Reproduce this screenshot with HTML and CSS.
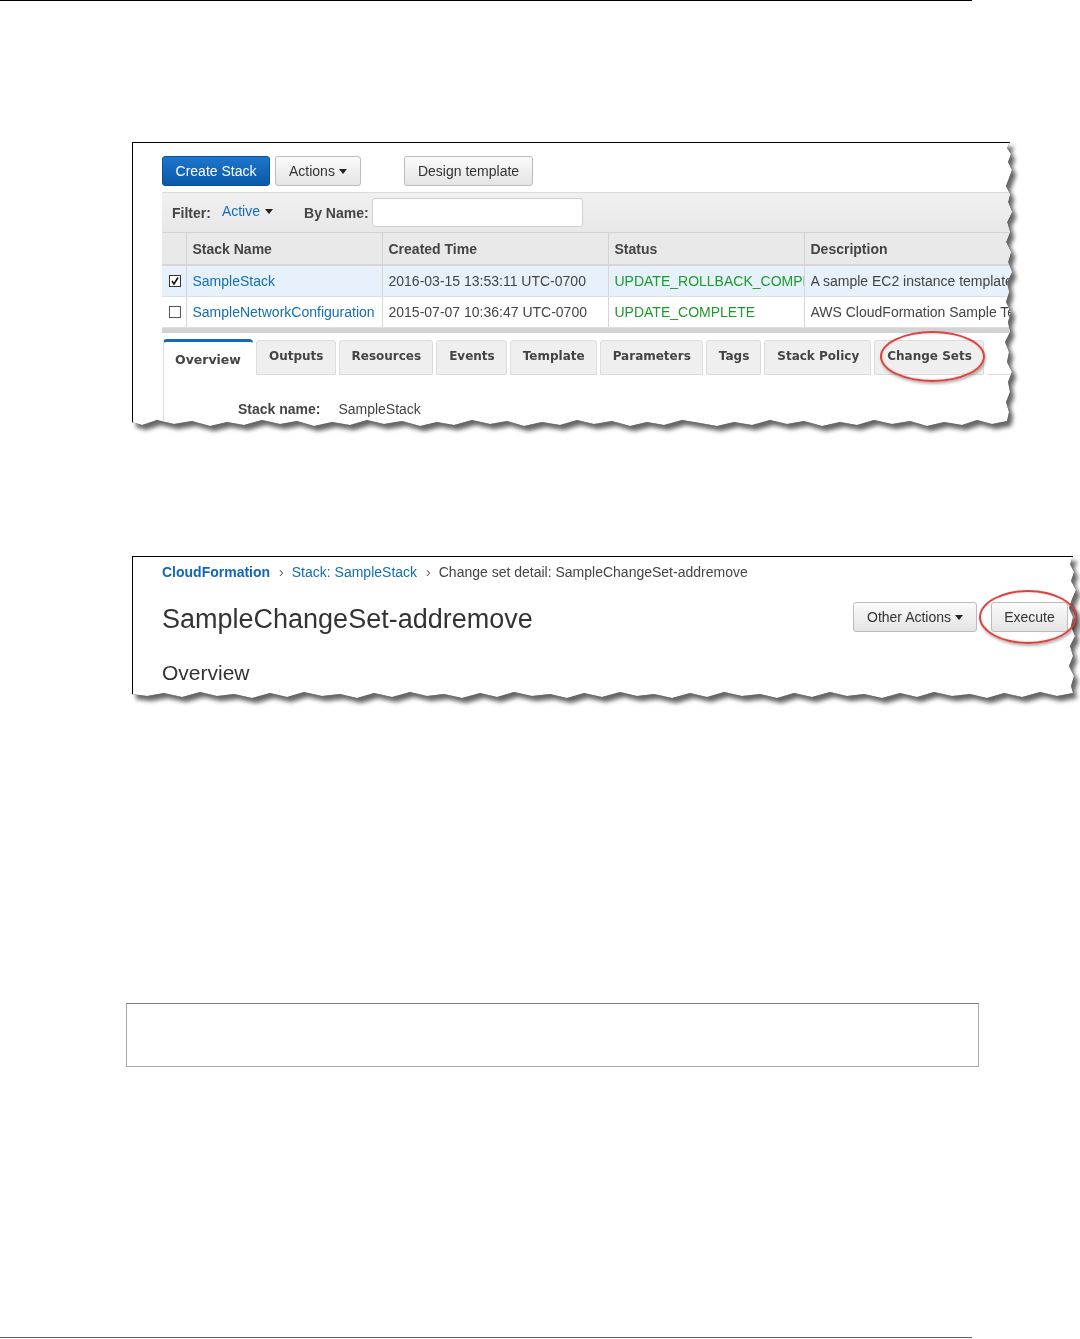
FILE: index.html
```html
<!DOCTYPE html>
<html lang="en">
<head>
  <meta charset="UTF-8">
  <title>Change Sets</title>
  <link rel="stylesheet" href="styles.css">
</head>
<body>
  <div class="rule-top"></div>

  <div class="shot shot-stacks">
    <div class="shot-inner">
      <div class="toolbar">
        <button class="btn btn-primary">Create Stack</button>
        <button class="btn">Actions<span class="caret"></span></button>
        <button class="btn btn-design">Design template</button>
      </div>

      <div class="filter-bar">
        <span class="label">Filter:</span>
        <span class="filter-link">Active<span class="caret"></span></span>
        <span class="label by-name">By Name:</span>
        <span class="name-input"></span>
      </div>

      <table class="stacks">
        <colgroup>
          <col class="c-check"><col class="c-name"><col class="c-time"><col class="c-status"><col class="c-desc">
        </colgroup>
        <thead>
          <tr>
            <th></th>
            <th>Stack Name</th>
            <th>Created Time</th>
            <th>Status</th>
            <th>Description</th>
          </tr>
        </thead>
        <tbody>
          <tr class="selected">
            <td class="check-cell">
              <svg width="12" height="12" viewBox="0 0 12 12"><rect x="0.5" y="0.5" width="11" height="11" fill="#fff" stroke="#333"/><path d="M3 6 L5 9 L9 2.5" fill="none" stroke="#111" stroke-width="1.6"/></svg>
            </td>
            <td><a>SampleStack</a></td>
            <td>2016-03-15 13:53:11 UTC-0700</td>
            <td class="status"><span class="clip">UPDATE_ROLLBACK_COMPLETE</span></td>
            <td><span class="clip">A sample EC2 instance template</span></td>
          </tr>
          <tr>
            <td class="check-cell">
              <svg width="12" height="12" viewBox="0 0 12 12"><rect x="0.5" y="0.5" width="11" height="11" fill="#fff" stroke="#555"/></svg>
            </td>
            <td><a>SampleNetworkConfiguration</a></td>
            <td>2015-07-07 10:36:47 UTC-0700</td>
            <td class="status">UPDATE_COMPLETE</td>
            <td><span class="clip">AWS CloudFormation Sample Template</span></td>
          </tr>
        </tbody>
      </table>
      <div class="splitter"></div>

      <div class="tabs">
        <span class="tab active">Overview</span>
        <span class="tab">Outputs</span>
        <span class="tab">Resources</span>
        <span class="tab">Events</span>
        <span class="tab">Template</span>
        <span class="tab">Parameters</span>
        <span class="tab">Tags</span>
        <span class="tab">Stack Policy</span>
        <span class="tab">Change Sets</span>
        <span class="tab-rest"></span>
      </div>
      <div class="tab-panel">
        <span class="field-label">Stack name:</span>
        <span class="field-value">SampleStack</span>
      </div>
    </div>
    <span class="callout callout-tab"></span>
  </div>

  <div class="shot shot-detail">
    <div class="shot-inner">
      <div class="crumbs">
        <a class="crumb-root">CloudFormation</a>
        <span class="sep">&rsaquo;</span>
        <a>Stack: SampleStack</a>
        <span class="sep">&rsaquo;</span>
        <span>Change set detail: SampleChangeSet-addremove</span>
      </div>
      <div class="detail-head">
        <h1>SampleChangeSet-addremove</h1>
        <div class="head-actions">
          <button class="btn btn-other">Other Actions<span class="caret"></span></button>
          <button class="btn btn-exec">Execute</button>
        </div>
      </div>
      <h2>Overview</h2>
    </div>
    <span class="callout callout-exec"></span>
  </div>

  <div class="empty-box"></div>

  <div class="rule-bottom"></div>
</body>
</html>
```

FILE: styles.css
```css
html, body {
  margin: 0;
  padding: 0;
  background: #fff;
  overflow-x: hidden;
}
body {
  font-family: "Liberation Sans", Arial, sans-serif;
  font-size: 14px;
  color: #444;
}
a {
  color: #146eb4;
  text-decoration: none;
}

.rule-top {
  width: 972px;
  border-top: 1px solid #000;
}
.rule-bottom {
  width: 972px;
  margin-top: 270px;
  border-top: 1px solid #5a5a5a;
}

/* torn screenshot frames */
.shot {
  position: relative;
  margin-left: 132px;
  filter: drop-shadow(0 0 0.5px rgba(0,0,0,0.9)) drop-shadow(4px 5px 2px rgba(0,0,0,0.6));
}
.shot-inner {
  box-sizing: border-box;
  background: #fff;
  border-left: 1px solid #000;
  border-top: 1px solid #000;
  overflow: hidden;
}
.shot-stacks {
  margin-top: 141px;
  width: 882px;
  height: 284px;
}
.shot-stacks .shot-inner {
  width: 882px;
  height: 284px;
  padding: 13px 0 0 29px;
  clip-path: polygon(0 0, 878px 0,
    875px 6px, 879px 12px, 876px 20px, 880px 28px, 877px 36px, 874px 44px, 878px 52px, 876px 60px,
    880px 70px, 875px 80px, 878px 90px, 874px 100px, 879px 110px, 876px 120px, 880px 130px, 875px 140px,
    877px 150px, 874px 160px, 879px 170px, 876px 180px, 878px 190px, 873px 200px, 877px 210px, 875px 220px,
    880px 230px, 876px 240px, 878px 250px, 874px 260px, 877px 270px, 875px 279px,
    860px 282px, 845px 278px, 830px 283px, 812px 280px, 795px 284px, 778px 279px, 760px 282px, 742px 278px,
    725px 283px, 708px 280px, 690px 284px, 672px 279px, 655px 282px, 638px 278px, 620px 283px, 602px 280px,
    585px 284px, 568px 281px, 550px 278px, 532px 283px, 515px 280px, 498px 284px, 480px 279px, 462px 282px,
    445px 278px, 428px 283px, 410px 280px, 392px 284px, 375px 279px, 358px 282px, 340px 278px, 322px 283px,
    305px 280px, 288px 284px, 270px 279px, 252px 282px, 235px 278px, 218px 283px, 200px 280px, 182px 284px,
    165px 279px, 148px 282px, 130px 278px, 112px 283px, 95px 280px, 78px 284px, 60px 279px, 42px 282px,
    25px 278px, 10px 283px, 0 280px);
}
.shot-detail {
  margin-top: 130px;
  width: 945px;
  height: 142px;
}
.shot-detail .shot-inner {
  width: 945px;
  height: 142px;
  padding: 6px 0 0 29px;
  clip-path: polygon(0 0, 941px 0,
    938px 8px, 942px 16px, 939px 25px, 944px 34px, 940px 43px, 937px 52px, 941px 61px, 939px 70px,
    943px 80px, 938px 90px, 941px 100px, 937px 110px, 942px 120px, 939px 130px, 941px 137px,
    925px 140px, 908px 136px, 890px 141px, 872px 137px, 855px 142px, 838px 138px, 820px 140px, 802px 136px,
    785px 141px, 768px 137px, 750px 142px, 732px 138px, 715px 140px, 698px 136px, 680px 141px, 662px 137px,
    645px 142px, 628px 138px, 610px 140px, 592px 136px, 575px 141px, 558px 137px, 540px 142px, 522px 138px,
    505px 140px, 488px 136px, 470px 141px, 452px 137px, 435px 142px, 418px 138px, 400px 140px, 382px 136px,
    365px 141px, 348px 137px, 330px 142px, 312px 138px, 295px 140px, 278px 136px, 260px 141px, 242px 137px,
    225px 142px, 208px 138px, 190px 140px, 172px 136px, 155px 141px, 138px 137px, 120px 142px, 102px 138px,
    85px 140px, 68px 136px, 50px 141px, 32px 137px, 15px 140px, 0 138px);
}

/* red highlight rings */
.callout {
  position: absolute;
  box-sizing: border-box;
  border: 2.5px solid #d9443f;
  border-radius: 50%;
  box-shadow: 1px 2px 3px rgba(0,0,0,0.3), inset 0 0 2px rgba(217,68,63,0.4);
}
.callout-tab {
  left: 748px;
  top: 189px;
  width: 105px;
  height: 51px;
}
.callout-exec {
  left: 847px;
  top: 34px;
  width: 98px;
  height: 54px;
}

/* buttons */
.btn {
  box-sizing: border-box;
  height: 30px;
  padding: 0 13px;
  font-family: "Liberation Sans", Arial, sans-serif;
  font-size: 14px;
  color: #333;
  white-space: nowrap;
  background: linear-gradient(#fbfbfb, #e4e4e4);
  border: 1px solid #bcbcbc;
  border-radius: 3px;
  display: inline-flex;
  align-items: center;
}
.btn-primary {
  width: 108px;
  padding: 0;
  justify-content: center;
  color: #fff;
  background: linear-gradient(#1d76cc, #0b58a8);
  border-color: #0b4f96;
}
.caret {
  display: inline-block;
  margin-left: 4px;
  border-left: 4px solid transparent;
  border-right: 4px solid transparent;
  border-top: 5px solid #222;
}

.toolbar {
  display: flex;
  gap: 5px;
  height: 30px;
}
.toolbar .btn-design {
  margin-left: 38px;
}

/* filter bar */
.filter-bar {
  margin-top: 6px;
  width: 960px;
  height: 41px;
  box-sizing: border-box;
  display: flex;
  align-items: center;
  padding-left: 10px;
  background: linear-gradient(#f0f0f0, #e8e8e8);
  border-top: 1px solid #dcdcdc;
  border-bottom: 1px solid #d4d4d4;
}
.label {
  font-weight: bold;
  color: #444;
}
.filter-link {
  margin-left: 11px;
  margin-top: -4px;
  color: #146eb4;
}
.filter-link .caret {
  border-top-color: #222;
  margin-left: 5px;
  vertical-align: 2px;
}
.by-name {
  margin-left: 31px;
}
.name-input {
  margin-left: 3px;
  width: 211px;
  height: 29px;
  box-sizing: border-box;
  background: #fff;
  border: 1px solid #d0d0d0;
  border-radius: 3px;
}

/* stacks table */
.stacks {
  width: 960px;
  table-layout: fixed;
  border-collapse: collapse;
}
.c-check { width: 24px; }
.c-name { width: 196px; }
.c-time { width: 226px; }
.c-status { width: 196px; }
.c-desc { width: 318px; }
.stacks th {
  height: 31px;
  padding: 0 6px;
  text-align: left;
  font-weight: bold;
  color: #444;
  background: #e9e9e9;
  border-right: 1px solid #d2d2d2;
  border-bottom: 2px solid #d6d6d6;
}
.stacks td {
  height: 30px;
  padding: 0 5px 0 6px;
  white-space: nowrap;
  overflow: hidden;
  color: #444;
  border-right: 1px solid #d6d6d6;
  border-bottom: 1px solid #dedede;
}
.stacks .clip {
  display: block;
  overflow: hidden;
  white-space: nowrap;
}
.stacks tr.selected td {
  background: #e6f1fb;
}
.stacks .check-cell {
  padding: 0 0 0 7px;
  line-height: 0;
}
.stacks .status {
  color: #1d9a2c;
  padding-right: 0;
}
.splitter {
  width: 960px;
  height: 5px;
  background: #d3d3d3;
}

/* tabs */
.tabs {
  margin-top: 6px;
  display: flex;
  align-items: flex-end;
  gap: 3px;
  height: 36px;
  font-family: "DejaVu Sans", Verdana, sans-serif;
  font-size: 12px;
  font-weight: bold;
  color: #444;
}
.tab {
  box-sizing: border-box;
  height: 35px;
  padding: 0 11px 3px 12px;
  display: flex;
  align-items: center;
  background: #efefef;
  border: 1px solid #dcdcdc;
  border-radius: 3px 3px 0 0;
}
.tab.active {
  height: 36px;
  width: 90px;
  margin-left: 1px;
  padding: 2px 0 0 11px;
  background: #fff;
  border: none;
  border-left: 1px solid #dcdcdc;
  border-top: 3px solid #1569bd;
  border-radius: 4px 4px 0 0;
  font-size: 12.5px;
}
.tab-rest {
  flex: 1;
  align-self: flex-end;
  border-bottom: 1px solid #dcdcdc;
}
.tab-panel {
  margin-left: 1px;
  height: 60px;
  border-left: 1px solid #dcdcdc;
  padding: 26px 0 0 74px;
  box-sizing: border-box;
}
.field-label {
  font-weight: bold;
  color: #444;
}
.field-value {
  margin-left: 14px;
  color: #444;
}

/* change set detail */
.crumbs {
  display: flex;
  height: 18px;
  line-height: 18px;
  color: #444;
}
.crumbs .crumb-root {
  font-weight: bold;
  color: #1166bb;
}
.crumbs .sep {
  margin: 0 8px 0 9px;
  color: #666;
}
.detail-head {
  margin-top: 21px;
  width: 906px;
  display: flex;
  justify-content: space-between;
  align-items: flex-start;
}
h1 {
  margin: 0;
  font-size: 27px;
  line-height: 34px;
  font-weight: normal;
  color: #333;
}
.head-actions {
  display: flex;
  gap: 14px;
}
.btn-other {
  width: 124px;
  padding: 0 0 0 13px;
}
.btn-exec {
  width: 77px;
  justify-content: center;
  padding: 0;
}
h2 {
  margin: 24px 0 0;
  font-size: 21px;
  line-height: 26px;
  font-weight: normal;
  color: #333;
}

/* blank bordered box */
.empty-box {
  margin: 305px 0 0 126px;
  width: 853px;
  height: 64px;
  box-sizing: border-box;
  border: 1px solid #a8a8a8;
  border-top-color: #808080;
}
```
